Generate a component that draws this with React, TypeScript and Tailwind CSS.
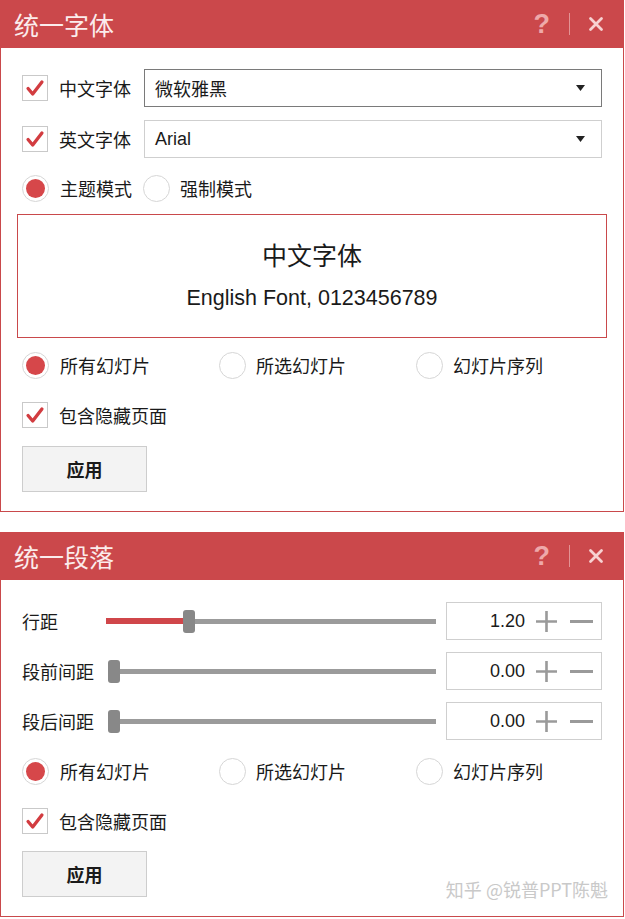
import React from "react";

const CJK = { fontFamily: '"Noto Sans CJK SC", "Noto Sans", sans-serif' };
const LAT = { fontFamily: '"Liberation Sans", "Noto Sans CJK SC", Arial, sans-serif' };

function Check() {
  return (
    <div className="w-[26px] h-[26px] border border-[#c9c9c9] bg-white flex items-center justify-center shrink-0">
      <svg width="26" height="26" viewBox="0 0 26 26">
        <path d="M5.5 13.5 L10.5 19.5 L20.5 6.5" fill="none" stroke="#d23c40" strokeWidth="3.6" strokeLinecap="round" strokeLinejoin="round" />
      </svg>
    </div>
  );
}

function Radio({ on }: { on?: boolean }) {
  return (
    <div className="w-[27px] h-[27px] rounded-full border border-[#d6d6d6] bg-white flex items-center justify-center shrink-0">
      {on && <div className="w-[19px] h-[19px] rounded-full bg-[#d6474a]" />}
    </div>
  );
}

function TitleBar({ title }: { title: string }) {
  return (
    <div className="h-[48px] bg-[#cb484b] flex items-center pl-[14px] pr-[20px]">
      <div className="text-[25px] text-[#fbecec] leading-none" style={CJK}>{title}</div>
      <div className="ml-auto flex items-center">
        <span className="text-[27px] font-bold text-[#eea9aa] leading-none" style={LAT}>?</span>
        <div className="w-px h-[22px] bg-[#e39394] ml-[19px] mr-[18px]" />
        <svg width="16" height="16" viewBox="0 0 16 16">
          <path d="M2.5 2.5 L13.5 13.5 M13.5 2.5 L2.5 13.5" stroke="#f7d2d2" strokeWidth="2.8" strokeLinecap="round" />
        </svg>
      </div>
    </div>
  );
}

function Select({ value, dark, latin }: { value: string; dark?: boolean; latin?: boolean }) {
  return (
    <div className={`flex-1 h-[38px] border ${dark ? "border-[#7a7a7a]" : "border-[#cfcfcf]"} bg-white flex items-center pl-[10px] pr-[16px]`}>
      <span className="text-[18px] text-[#1a1a1a]" style={latin ? LAT : CJK}>{value}</span>
      <svg className="ml-auto" width="9" height="6" viewBox="0 0 9 6">
        <path d="M0 0 H9 L4.5 6 Z" fill="#222" />
      </svg>
    </div>
  );
}

function ScopeRadios() {
  return (
    <div className="flex items-center h-[27px]">
      <div className="flex items-center w-[197px]">
        <Radio on />
        <span className="ml-[11px] text-[18px] text-[#1a1a1a]" style={CJK}>所有幻灯片</span>
      </div>
      <div className="flex items-center w-[197px]">
        <Radio />
        <span className="ml-[10px] text-[18px] text-[#1a1a1a]" style={CJK}>所选幻灯片</span>
      </div>
      <div className="flex items-center">
        <Radio />
        <span className="ml-[10px] text-[18px] text-[#1a1a1a]" style={CJK}>幻灯片序列</span>
      </div>
    </div>
  );
}

function HiddenCheck() {
  return (
    <div className="flex items-center h-[26px]">
      <Check />
      <span className="ml-[11px] text-[18px] text-[#1a1a1a]" style={CJK}>包含隐藏页面</span>
    </div>
  );
}

function ApplyButton() {
  return (
    <div className="w-[125px] h-[46px] border border-[#cdcdcd] bg-[#f3f3f3] flex items-center justify-center">
      <span className="text-[18px] font-bold text-[#1a1a1a]" style={CJK}>应用</span>
    </div>
  );
}

function SliderRow({ label, value, pct }: { label: string; value: string; pct: number }) {
  return (
    <div className="flex items-center h-[38px]">
      <div className="w-[84px] text-[18px] text-[#1a1a1a]" style={CJK}>{label}</div>
      <div className="relative w-[331px] h-[23px] flex items-center">
        <div className="absolute left-0 right-0 h-[5px] bg-[#9b9b9b]" />
        {pct > 10 && <div className="absolute left-0 h-[6px] bg-[#d0464a]" style={{ width: `${pct}px` }} />}
        {pct <= 10 && <div className="absolute left-0 h-[5px] bg-white" style={{ width: `${pct}px` }} />}
        <div className="absolute w-[12px] h-[23px] rounded-[3px] bg-[#888888]" style={{ left: `${pct}px` }} />
      </div>
      <div className="ml-[10px] w-[156px] h-[38px] border border-[#cfcfcf] bg-white flex items-center justify-end pr-[8px]">
        <span className="text-[18px] text-[#1a1a1a] mr-[10px]" style={LAT}>{value}</span>
        <svg width="23" height="23" viewBox="0 0 23 23">
          <path d="M11.5 1 V22 M1 11.5 H22" stroke="#9a9a9a" strokeWidth="2.6" />
        </svg>
        <svg className="ml-[12px]" width="23" height="23" viewBox="0 0 23 23">
          <path d="M0 11.5 H23" stroke="#9a9a9a" strokeWidth="3" />
        </svg>
      </div>
    </div>
  );
}

export default function App() {
  return (
    <div className="w-[625px] h-[919px] bg-white flex flex-col">
      {/* Panel 1 */}
      <div className="w-[624px] flex flex-col">
        <TitleBar title="统一字体" />
        <div className="border-x border-b border-[#c9494b] h-[464px] px-[21px] pt-[21px] flex flex-col">
          <div className="flex items-center h-[38px]">
            <Check />
            <span className="ml-[11px] mr-[13px] text-[18px] text-[#1a1a1a]" style={CJK}>中文字体</span>
            <Select value="微软雅黑" dark />
          </div>
          <div className="flex items-center h-[38px] mt-[13px]">
            <Check />
            <span className="ml-[11px] mr-[13px] text-[18px] text-[#1a1a1a]" style={CJK}>英文字体</span>
            <Select value="Arial" latin />
          </div>
          <div className="flex items-center h-[27px] mt-[17px]">
            <Radio on />
            <span className="ml-[11px] text-[18px] text-[#1a1a1a]" style={CJK}>主题模式</span>
            <div className="ml-[11px]"><Radio /></div>
            <span className="ml-[10px] text-[18px] text-[#1a1a1a]" style={CJK}>强制模式</span>
          </div>
          <div className="-mx-[5px] mt-[12px] h-[124px] border border-[#c9494b] flex flex-col items-center justify-center">
            <div className="text-[25px] text-[#1a1a1a] leading-none" style={CJK}>中文字体</div>
            <div className="mt-[21px] text-[21.5px] text-[#1a1a1a] leading-none" style={LAT}>English Font, 0123456789</div>
          </div>
          <div className="mt-[14px]"><ScopeRadios /></div>
          <div className="mt-[23px]"><HiddenCheck /></div>
          <div className="mt-[18px]"><ApplyButton /></div>
        </div>
      </div>

      {/* Panel 2 */}
      <div className="w-[624px] mt-[20px] flex flex-col relative">
        <TitleBar title="统一段落" />
        <div className="border-x border-b border-[#c9494b] h-[337px] px-[21px] pt-[22px] flex flex-col">
          <SliderRow label="行距" value="1.20" pct={77} />
          <div className="mt-[12px]"><SliderRow label="段前间距" value="0.00" pct={2} /></div>
          <div className="mt-[12px]"><SliderRow label="段后间距" value="0.00" pct={2} /></div>
          <div className="mt-[18px]"><ScopeRadios /></div>
          <div className="mt-[23px]"><HiddenCheck /></div>
          <div className="mt-[17px]"><ApplyButton /></div>
        </div>
        <div className="absolute right-[16px] bottom-[14px] text-[18px] text-[#c9c9c9]" style={CJK}>知乎 @锐普PPT陈魁</div>
      </div>
    </div>
  );
}
